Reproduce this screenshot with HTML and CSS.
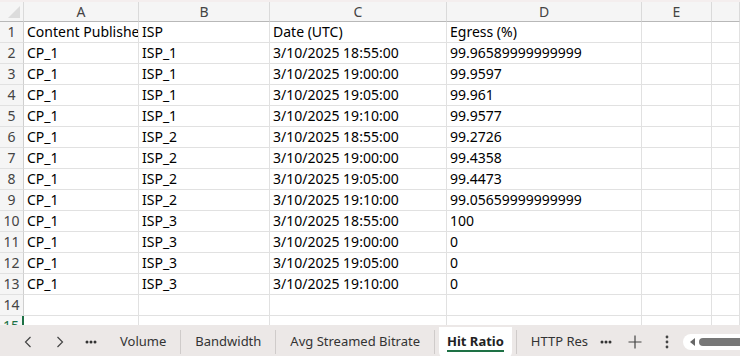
FILE: index.html
```html
<!DOCTYPE html>
<html lang="en">
<head>
    <meta charset="UTF-8" />
    <meta name="viewport" content="width=device-width, initial-scale=1.0" />
    <title>Hit Ratio</title>
    <link rel="stylesheet" href="styles.css">
</head>
<body>
    <div class="sheet">
        <div class="row head">
            <div class="corner"><span class="tri"></span></div>
            <div class="col">A</div>
            <div class="col">B</div>
            <div class="col">C</div>
            <div class="col">D</div>
            <div class="col">E</div>
            <div class="col"></div>
        </div>
        <div id="rows"></div>
    </div>

    <div class="tabs">
        <span class="nav first">
            <svg width="8" height="12" viewBox="0 0 8 12"><path d="M6.5 1 L1.5 6 L6.5 11" fill="none" stroke="#444" stroke-width="1.2"/></svg>
        </span>
        <span class="nav">
            <svg width="8" height="12" viewBox="0 0 8 12"><path d="M1.5 1 L6.5 6 L1.5 11" fill="none" stroke="#444" stroke-width="1.2"/></svg>
        </span>
        <span class="dots">
            <svg width="12" height="4" viewBox="0 0 12 4"><circle cx="2" cy="2" r="1.5" fill="#333"/><circle cx="6" cy="2" r="1.5" fill="#333"/><circle cx="10" cy="2" r="1.5" fill="#333"/></svg>
        </span>
        <span class="tab">Volume</span>
        <span class="sep"></span>
        <span class="tab">Bandwidth</span>
        <span class="sep"></span>
        <span class="tab">Avg Streamed Bitrate</span>
        <span class="sep"></span>
        <span class="tab active">Hit Ratio</span>
        <span class="sep"></span>
        <span class="tab">HTTP Res</span>
        <span class="dots more">
            <svg width="12" height="4" viewBox="0 0 12 4"><circle cx="2" cy="2" r="1.5" fill="#333"/><circle cx="6" cy="2" r="1.5" fill="#333"/><circle cx="10" cy="2" r="1.5" fill="#333"/></svg>
        </span>
        <span class="plus">
            <svg width="14" height="14" viewBox="0 0 14 14"><path d="M7 0.5 V13.5 M0.5 7 H13.5" stroke="#444" stroke-width="1.2"/></svg>
        </span>
        <span class="kebab">
            <svg width="4" height="14" viewBox="0 0 4 14"><circle cx="2" cy="2" r="1.4" fill="#444"/><circle cx="2" cy="7" r="1.4" fill="#444"/><circle cx="2" cy="12" r="1.4" fill="#444"/></svg>
        </span>
        <div class="scroll">
            <span class="arrow"></span>
            <span class="thumb"></span>
        </div>
    </div>

    <script>
        const data = [
            ['Content Publisher', 'ISP', 'Date (UTC)', 'Egress (%)'],
            ['CP_1', 'ISP_1', '3/10/2025 18:55:00', '99.96589999999999'],
            ['CP_1', 'ISP_1', '3/10/2025 19:00:00', '99.9597'],
            ['CP_1', 'ISP_1', '3/10/2025 19:05:00', '99.961'],
            ['CP_1', 'ISP_1', '3/10/2025 19:10:00', '99.9577'],
            ['CP_1', 'ISP_2', '3/10/2025 18:55:00', '99.2726'],
            ['CP_1', 'ISP_2', '3/10/2025 19:00:00', '99.4358'],
            ['CP_1', 'ISP_2', '3/10/2025 19:05:00', '99.4473'],
            ['CP_1', 'ISP_2', '3/10/2025 19:10:00', '99.05659999999999'],
            ['CP_1', 'ISP_3', '3/10/2025 18:55:00', '100'],
            ['CP_1', 'ISP_3', '3/10/2025 19:00:00', '0'],
            ['CP_1', 'ISP_3', '3/10/2025 19:05:00', '0'],
            ['CP_1', 'ISP_3', '3/10/2025 19:10:00', '0'],
            ['', '', '', ''],
            ['', '', '', '']
        ];

        const rows = document.getElementById('rows');
        data.forEach((r, i) => {
            let html = `<div class="row"><div class="num${i === 14 ? ' current' : ''}">${i + 1}</div>`;
            r.forEach(v => { html += `<div class="cell">${v}</div>`; });
            html += '<div class="cell"></div><div class="cell"></div></div>';
            rows.innerHTML += html;
        });
    </script>
</body>
</html>
```

FILE: styles.css
```css
body {
    margin: 0;
    width: 740px;
    height: 356px;
    overflow: hidden;
    font-family: "Noto Sans", sans-serif;
    font-size: 14px;
    color: #000;
    background: #fff;
}

.sheet {
    height: 323px;
    overflow: hidden;
    border-top: 2px solid #f4eeee;
}

.row {
    display: grid;
    grid-template-columns: 24px 115px 131px 177px 195px 70px 28px;
    height: 21px;
}

.row > div {
    box-sizing: border-box;
    border-right: 1px solid #e1e1e1;
    border-bottom: 1px solid #e1e1e1;
    white-space: nowrap;
    overflow: hidden;
    line-height: 20px;
}

.head {
    height: 20px;
    background: #f5f5f5;
    color: #444;
}

.head > div {
    border-bottom: 1px solid #b8b8b8;
    border-right-color: #dadada;
    line-height: 19px;
    text-align: center;
}

.corner {
    position: relative;
}

.tri {
    position: absolute;
    right: 3px;
    bottom: 3px;
    width: 0;
    height: 0;
    border-left: 12px solid transparent;
    border-bottom: 12px solid #dcdcdc;
}

.num {
    background: #f5f5f5;
    color: #444;
    text-align: center;
    border-right-color: #cfcfcf !important;
}

.num.current {
    border-right: 2px solid #1e7145 !important;
    color: #1e7145;
}

.cell {
    padding-left: 3px;
}

.tabs {
    height: 33px;
    background: #ece8e7;
    display: flex;
    align-items: center;
    color: #333;
    font-size: 13px;
}

.nav,
.dots,
.plus,
.kebab {
    display: flex;
    justify-content: center;
    align-items: center;
    height: 33px;
    flex: none;
}

.nav {
    width: 32px;
}

.nav.first {
    margin-left: 12px;
}

.dots {
    width: 30px;
}

.dots.more {
    width: 24px;
    margin-left: -8px;
}

.plus {
    width: 32px;
    margin-left: 1px;
}

.kebab {
    width: 32px;
}

.tab {
    padding: 0 14px;
    line-height: 33px;
    white-space: nowrap;
    flex: none;
}

.tab.active {
    background: #fff;
    font-weight: 700;
    color: #222;
    border-radius: 0 0 6px 6px;
    height: 31px;
    line-height: 29px;
    margin: 2px 4px 0;
    align-self: flex-start;
    position: relative;
    padding: 0 8px;
}

.tab.active::after {
    content: "";
    position: absolute;
    left: 8px;
    right: 8px;
    bottom: 6px;
    height: 2px;
    background: #1e7145;
}

.sep {
    width: 1px;
    height: 24px;
    background: #cfcbca;
    flex: none;
}

.scroll {
    flex: 1;
    height: 16px;
    background: #fff;
    border-radius: 8px 0 0 8px;
    display: flex;
    align-items: center;
}

.arrow {
    margin-left: 7px;
    width: 0;
    height: 0;
    border-top: 4px solid transparent;
    border-bottom: 4px solid transparent;
    border-right: 5px solid #666;
}

.thumb {
    flex: 1;
    height: 8px;
    margin-left: 4px;
    background: #777;
    border-radius: 4px 0 0 4px;
}
```
